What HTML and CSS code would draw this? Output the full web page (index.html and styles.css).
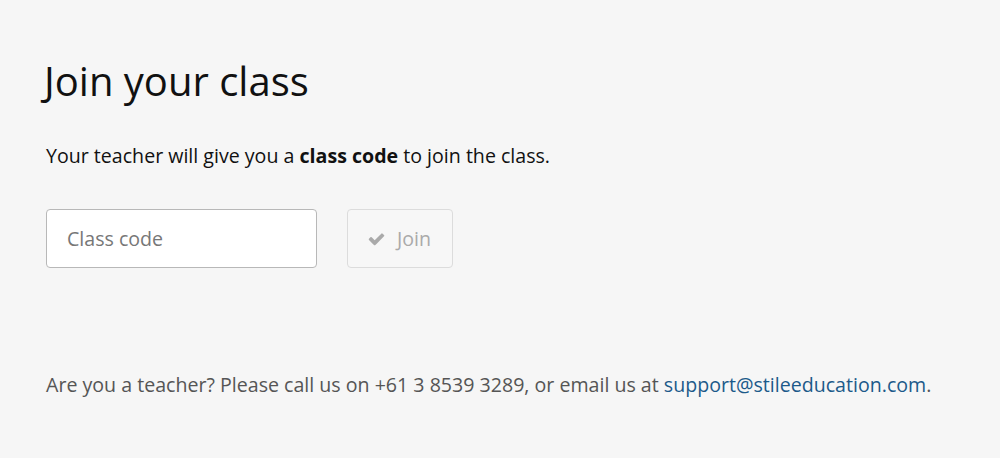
FILE: index.html
```html
<!DOCTYPE html>
<html lang="en">
<head>
<meta charset="utf-8">
<title>Join your class</title>
<link rel="stylesheet" href="styles.css">
</head>
<body>
<main class="page">
  <h1 class="title">Join your class</h1>
  <p class="intro">Your teacher will give you a <strong>class code</strong> to join the class.</p>
  <form class="join-form">
    <input class="code-input" type="text" placeholder="Class code">
    <button class="join-btn" type="button" disabled>
      <svg class="check" viewBox="0 0 1792 1792" width="21" height="18" aria-hidden="true"><path fill="currentColor" d="M1671 566q0 40-28 68l-724 724-136 136q-28 28-68 28t-68-28l-136-136-362-362q-28-28-28-68t28-68l136-136q28-28 68-28t68 28l294 295 656-657q28-28 68-28t68 28l136 136q28 28 28 68z"/></svg>
      <span>Join</span>
    </button>
  </form>
  <p class="footer-note">Are you a teacher? Please call us on +61 3 8539 3289, or email us at <a class="mail" href="#">support@stileeducation.com</a>.</p>
</main>
</body>
</html>
```

FILE: styles.css
```css
html, body {
  margin: 0;
  padding: 0;
  background: #f6f6f6;
}
body {
  font-family: "Open Sans", "Liberation Sans", sans-serif;
  color: #111;
}
.page {
  padding: 56px 46px 0 46px;
}
.title {
  margin: 0 0 0 -2px;
  font-size: 40px;
  font-weight: 400;
  line-height: 50px;
  color: #111;
}
.intro {
  margin: 36px 0 0 0;
  font-size: 19.6px;
  line-height: 28px;
  color: #111;
}
.intro strong {
  font-weight: 700;
}
.join-form {
  display: flex;
  gap: 30px;
  margin-top: 39px;
}
.code-input {
  box-sizing: border-box;
  width: 271px;
  height: 59px;
  border: 1px solid #b8b8b8;
  border-radius: 4px;
  background: #fff;
  padding: 0 20px;
  font-family: inherit;
  font-size: 19.6px;
  color: #333;
  outline: none;
}
.code-input::placeholder {
  color: #777;
}
.join-btn {
  box-sizing: border-box;
  display: flex;
  align-items: center;
  gap: 10px;
  width: 106px;
  height: 59px;
  padding: 0 0 0 18px;
  border: 1px solid #dcdcdc;
  border-radius: 4px;
  background: #f7f7f7;
  font-family: inherit;
  font-size: 19.6px;
  color: #aaa;
}
.check {
  display: block;
  color: #aaa;
}
.footer-note {
  margin: 103px 0 0 0;
  font-size: 19.6px;
  line-height: 28px;
  color: #555;
}
.mail {
  color: #1c5a8a;
  text-decoration: none;
}
```
